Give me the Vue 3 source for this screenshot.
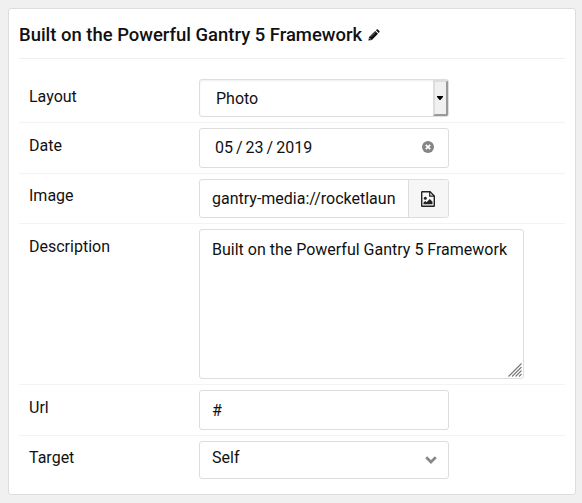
<script setup>
const title = 'Built on the Powerful Gantry 5 Framework'
</script>

<template>
  <section class="card">
    <header class="head">
      <h4>{{ title }}</h4>
      <svg class="pencil" viewBox="0 0 12 12">
        <path d="M0.4 11.6 L1.1 8.1 L7.2 2 L10 4.8 L3.9 10.9 Z" fill="#111" />
        <path d="M7.9 1.3 L8.7 0.5 Q9.3 0.1 9.9 0.6 L11.4 2.1 Q11.9 2.7 11.4 3.3 L10.7 4.1 Z" fill="#111" />
        <path d="M2.7 7.8 L7.2 3.3" stroke="#999" stroke-width=".7" />
        <path d="M1.5 9.2 L2.8 10.5" stroke="#ddd" stroke-width="1" />
      </svg>
    </header>

    <div class="row">
      <label>Layout</label>
      <div class="control native">
        <span class="value">Photo</span>
        <span class="drop"><svg viewBox="0 0 6 4"><path d="M0 0H6V1L3.5 4H2.5L0 1Z" /></svg></span>
      </div>
    </div>

    <div class="row">
      <label>Date</label>
      <div class="control date">
        <span class="value">05<i>/</i>23<i>/</i>2019</span>
        <svg class="clear" viewBox="0 0 12 12">
          <circle cx="6" cy="6" r="6" fill="#858585" />
          <path d="M3.8 3.8L8.2 8.2M8.2 3.8L3.8 8.2" stroke="#fff" stroke-width="1.7" />
        </svg>
      </div>
    </div>

    <div class="row">
      <label class="high">Image</label>
      <div class="control image">
        <span class="value">gantry-media://rocketlaun</span>
        <span class="picker">
          <svg viewBox="0 0 14 16">
            <path d="M.7 1.2Q.7.7 1.2.7H9L13.3 5V14.8Q13.3 15.3 12.8 15.3H1.2Q.7 15.3.7 14.8Z" fill="none" stroke="#222" stroke-width="1.4" />
            <path d="M8.7.8V5.2H13.2" fill="none" stroke="#222" stroke-width="1.2" />
            <circle cx="4.3" cy="7.3" r="1.5" fill="#222" />
            <path d="M2.5 13.3V11.5L4.2 10L5.6 11.2L8.8 8L11.5 10.7V13.3Z" fill="#222" />
          </svg>
        </span>
      </div>
    </div>

    <div class="row">
      <label>Description</label>
      <div class="control area">
        <span class="value">{{ title }}</span>
        <svg class="grip" viewBox="0 0 14 14">
          <path d="M0.5 13.5L13.5 0.5M4 13.5L13.5 4M7.5 13.5L13.5 7.5M11 13.5L13.5 11" stroke="#777" stroke-width="1.1" />
        </svg>
      </div>
    </div>

    <div class="row">
      <label>Url</label>
      <div class="control url"><span class="value">#</span></div>
    </div>

    <div class="row">
      <label class="high">Target</label>
      <div class="control target">
        <span class="value">Self</span>
        <svg class="chevron" viewBox="0 0 12 8"><path d="M1.2 1.2L6 6L10.8 1.2" fill="none" stroke="#888" stroke-width="2.7" /></svg>
      </div>
    </div>
  </section>
</template>

<style>
body {
  background: #f0f0f0;
}
</style>

<style scoped>
.card {
  box-sizing: border-box;
  width: 568px;
  height: 487px;
  margin: 8px;
  padding: 0 10px;
  background: #fff;
  border: 1px solid #ddd;
  border-radius: 3px;
  color: #111;
  font: 16px/24px Roboto, sans-serif;
}
.head {
  display: flex;
  align-items: center;
  box-sizing: border-box;
  height: 50px;
  margin-bottom: 15px;
  padding-top: 2px;
  border-bottom: 1px solid #eee;
}
h4 {
  margin: 0;
  font-size: 18.44px;
  font-weight: 500;
  white-space: nowrap;
}
.pencil {
  width: 12px;
  height: 12px;
  margin-left: 6px;
}
.row {
  display: flex;
  align-items: flex-start;
  padding: 5px 0 5px 10px;
  border-bottom: 1px solid #f3f3f3;
}
.row:last-child {
  border-bottom: 0;
}
label {
  width: 170px;
  padding-top: 6px;
}
label.high {
  padding-top: 5px;
}
.control {
  display: flex;
  align-items: center;
  box-sizing: border-box;
  width: 250px;
  height: 40px;
  padding-left: 12px;
  border: 1px solid #ddd;
  border-radius: 3px;
  white-space: nowrap;
}
.value {
  flex: 1;
}
.native {
  height: 38px;
  padding-left: 16px;
  box-shadow: inset 0 1px 2px #eee;
  overflow: hidden;
}
.native .value {
  padding-top: 2px;
}
.drop {
  display: flex;
  align-items: center;
  justify-content: center;
  box-sizing: border-box;
  width: 15px;
  height: 36px;
  padding-right: 1px;
  background: #f0f0f0;
  border: 2px solid;
  border-color: #ddd #999 #999 #ddd;
}
.drop svg {
  width: 6px;
  height: 4px;
}
.date {
  padding: 0 14px 0 15px;
}
.date i {
  margin: 0 3px;
  font-style: normal;
}
.clear {
  width: 12px;
  height: 12px;
  margin: -3px 0 0;
}
.image {
  height: 39px;
}
.picker {
  display: flex;
  align-items: center;
  justify-content: center;
  box-sizing: border-box;
  width: 40px;
  height: 100%;
  padding-right: 1px;
  background: #f6f6f6;
  border-left: 1px solid #ddd;
  border-radius: 0 2px 2px 0;
}
.picker svg {
  width: 14px;
  height: 16px;
}
.area {
  position: relative;
  width: 325px;
  height: 150px;
  padding-top: 8px;
  align-items: flex-start;
}
.grip {
  position: absolute;
  right: 1px;
  bottom: 1px;
  width: 14px;
  height: 14px;
}
.url {
  padding-top: 2px;
}
.target {
  height: 38px;
  padding-right: 11px;
  padding-bottom: 4px;
}
.chevron {
  width: 12px;
  height: 8px;
  margin-top: 3px;
}
</style>
